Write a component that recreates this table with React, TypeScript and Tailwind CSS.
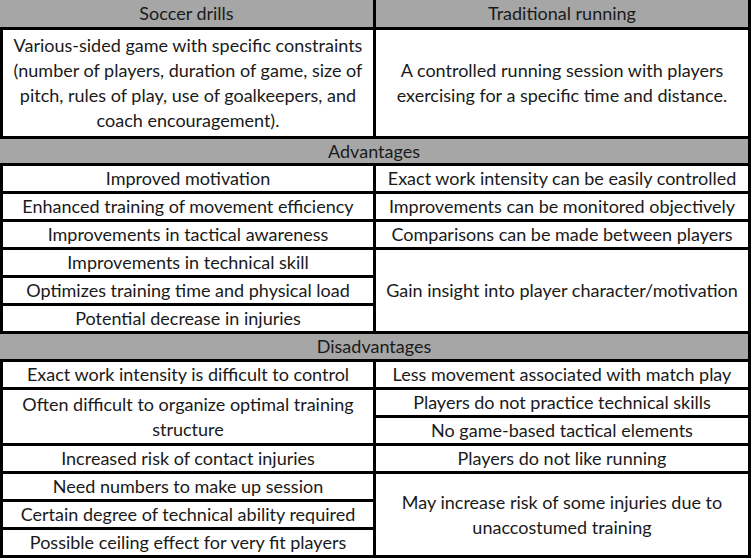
import React from "react";

const cell = "bg-white flex items-center justify-center text-center";
const head = "bg-[#a6a6a6] flex items-center justify-center text-center";

export default function App() {
  return (
    <div
      className="w-[751px] h-[558px] bg-black pl-[3px] pr-[3px] pb-[3px] text-[18px] text-[#1a1a1a] leading-[25px]"
      style={{ fontFamily: "Lato, 'Open Sans', sans-serif" }}
    >
      <div className="grid grid-cols-[370px_1fr] gap-[3px] grid-rows-[27px_106px_24px_repeat(6,25px)_25px_repeat(7,25px)] h-full">
        {/* column titles */}
        <div className={`${head} -ml-[3px]`}>Soccer drills</div>
        <div className={head}>Traditional running</div>

        <div className={`${cell} px-1`}>
          Various-sided game with specific constraints (number of players, duration of game, size of
          pitch, rules of play, use of goalkeepers, and coach encouragement).
        </div>
        <div className={`${cell} px-4`}>
          A controlled running session with players exercising for a specific time and distance.
        </div>

        {/* advantages */}
        <div className={`${head} col-span-2 -ml-[3px]`}>Advantages</div>

        <div className={`${cell} col-start-1 row-start-4`}>Improved motivation</div>
        <div className={`${cell} col-start-1 row-start-5`}>Enhanced training of movement efficiency</div>
        <div className={`${cell} col-start-1 row-start-6`}>Improvements in tactical awareness</div>
        <div className={`${cell} col-start-1 row-start-7`}>Improvements in technical skill</div>
        <div className={`${cell} col-start-1 row-start-8`}>Optimizes training time and physical load</div>
        <div className={`${cell} col-start-1 row-start-9`}>Potential decrease in injuries</div>

        <div className={`${cell} col-start-2 row-start-4`}>Exact work intensity can be easily controlled</div>
        <div className={`${cell} col-start-2 row-start-5`}>Improvements can be monitored objectively</div>
        <div className={`${cell} col-start-2 row-start-6`}>Comparisons can be made between players</div>
        <div className={`${cell} col-start-2 row-start-7 row-span-3`}>Gain insight into player character/motivation</div>

        {/* disadvantages */}
        <div className={`${head} col-span-2 -ml-[3px] row-start-10`}>Disadvantages</div>

        <div className={`${cell} col-start-1 row-start-11`}>Exact work intensity is difficult to control</div>
        <div className={`${cell} col-start-1 row-start-12 row-span-2 px-4`}>
          Often difficult to organize optimal training structure
        </div>
        <div className={`${cell} col-start-1 row-start-14`}>Increased risk of contact injuries</div>
        <div className={`${cell} col-start-1 row-start-15`}>Need numbers to make up session</div>
        <div className={`${cell} col-start-1 row-start-16`}>Certain degree of technical ability required</div>
        <div className={`${cell} col-start-1 row-start-17`}>Possible ceiling effect for very fit players</div>

        <div className={`${cell} col-start-2 row-start-11`}>Less movement associated with match play</div>
        <div className={`${cell} col-start-2 row-start-12`}>Players do not practice technical skills</div>
        <div className={`${cell} col-start-2 row-start-13`}>No game-based tactical elements</div>
        <div className={`${cell} col-start-2 row-start-14`}>Players do not like running</div>
        <div className={`${cell} col-start-2 row-start-15 row-span-3 px-6`}>
          May increase risk of some injuries due to unaccostumed training
        </div>
      </div>
    </div>
  );
}
